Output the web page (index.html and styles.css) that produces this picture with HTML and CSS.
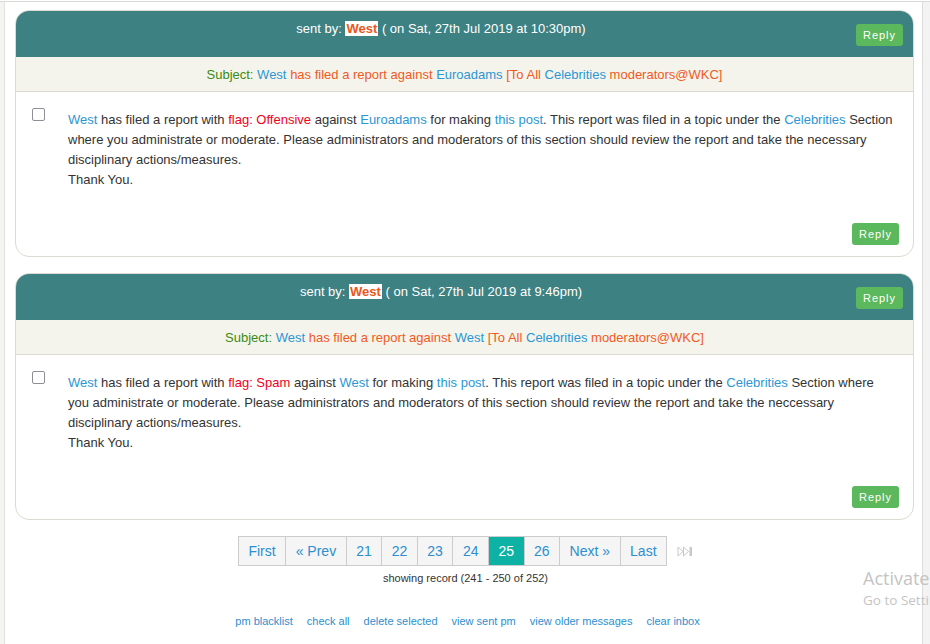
FILE: index.html
```html
<!DOCTYPE html>
<html lang="en">
<head>
<meta charset="utf-8">
<title>Inbox</title>
<link rel="stylesheet" href="styles.css">
</head>
<body>
<div class="page">
  <div class="gutter-left"></div>
  <main class="main">
    <article class="card">
      <header class="card-head">
        <div class="sent">sent by: <span class="sender">West</span> ( on Sat, 27th Jul 2019 at 10:30pm)</div>
        <a class="btn-reply" href="#">Reply</a>
      </header>
      <div class="subject"><span class="lbl">Subject:</span> <a class="blue" href="#">West</a> <span class="orange">has filed a report against</span> <a class="blue" href="#">Euroadams</a> <span class="orange">[To All</span> <a class="blue" href="#">Celebrities</a> <span class="orange">moderators@WKC]</span></div>
      <div class="card-body">
        <div class="msg-row">
          <input class="check" type="checkbox">
          <div class="msg-text">
            <a class="blue" href="#">West</a> has filed a report with <span class="red">flag: Offensive</span> against <a class="blue" href="#">Euroadams</a> for making <a class="blue" href="#">this post</a>. This report was filed in a topic under the <a class="blue" href="#">Celebrities</a> Section where you administrate or moderate. Please administrators and moderators of this section should review the report and take the necessary disciplinary actions/measures.<br>Thank You.
          </div>
        </div>
        <div class="msg-actions"><a class="btn-reply" href="#">Reply</a></div>
      </div>
    </article>

    <article class="card">
      <header class="card-head">
        <div class="sent">sent by: <span class="sender">West</span> ( on Sat, 27th Jul 2019 at 9:46pm)</div>
        <a class="btn-reply" href="#">Reply</a>
      </header>
      <div class="subject"><span class="lbl">Subject:</span> <a class="blue" href="#">West</a> <span class="orange">has filed a report against</span> <a class="blue" href="#">West</a> <span class="orange">[To All</span> <a class="blue" href="#">Celebrities</a> <span class="orange">moderators@WKC]</span></div>
      <div class="card-body">
        <div class="msg-row">
          <input class="check" type="checkbox">
          <div class="msg-text">
            <a class="blue" href="#">West</a> has filed a report with <span class="red">flag: Spam</span> against <a class="blue" href="#">West</a> for making <a class="blue" href="#">this post</a>. This report was filed in a topic under the <a class="blue" href="#">Celebrities</a> Section where you administrate or moderate. Please administrators and moderators of this section should review the report and take the neccessary disciplinary actions/measures.<br>Thank You.
          </div>
        </div>
        <div class="msg-actions"><a class="btn-reply" href="#">Reply</a></div>
      </div>
    </article>

    <div class="pager-row">
      <nav class="pager">
        <a href="#">First</a><a href="#">« Prev</a><a href="#">21</a><a href="#">22</a><a href="#">23</a><a href="#">24</a><span class="active">25</span><a href="#">26</a><a href="#">Next »</a><a href="#">Last</a>
      </nav>
      <svg class="end-icon" width="16" height="11" viewBox="0 0 16 11" aria-hidden="true">
        <path d="M1 1 L6 5.5 L1 10 Z" fill="none" stroke="#c8c8c8" stroke-width="1"/>
        <path d="M6.5 1 L11.5 5.5 L6.5 10 Z" fill="none" stroke="#c8c8c8" stroke-width="1"/>
        <rect x="12.5" y="1" width="2.5" height="9" fill="#c8c8c8"/>
      </svg>
    </div>
    <p class="showing">showing record (241 - 250 of 252)</p>

    <div class="links">
      <a href="#">pm blacklist</a><a href="#">check all</a><a href="#">delete selected</a><a href="#">view sent pm</a><a href="#">view older messages</a><a href="#">clear inbox</a>
    </div>
  </main>
  <div class="gutter-right"></div>
</div>
<div class="watermark">
  <div class="wm-title">Activate Windows</div>
  <div class="wm-sub">Go to Settings to activate Windows.</div>
</div>
</body>
</html>
```

FILE: styles.css
```css
html, body {
  margin: 0;
  padding: 0;
  background: #fff;
}
body {
  font-family: "Liberation Sans", Arial, sans-serif;
  font-size: 13px;
  color: #333;
  overflow: hidden;
}
a { text-decoration: none; }

.page {
  display: flex;
  margin-top: 1px;
  border-top: 1px solid #d9d9d9;
  min-height: 642px;
}
.gutter-left {
  width: 4px;
  background: #f4f4f4;
  border-right: 1px solid #e3e2d8;
}
.gutter-right {
  width: 7px;
  background: #f3f3f3;
  border-left: 1px solid #dcdcdc;
}
.main {
  flex: 1;
  padding: 8px 8px 0 10px;
  min-width: 0;
}

.card {
  border: 1px solid #dcdbcf;
  border-radius: 14px;
  overflow: hidden;
  margin-bottom: 16px;
  background: #fff;
}
.card-head {
  display: flex;
  align-items: flex-start;
  background: #3d8183;
  height: 46px;
  padding: 0 10px;
}
.sent {
  flex: 1;
  text-align: center;
  color: #fff;
  line-height: 16px;
  padding-top: 10px;
}
.sender {
  background: #fff;
  color: #e9571d;
  font-weight: bold;
  padding: 0 1px;
}
.card-head .btn-reply {
  margin-top: 13px;
}
.btn-reply {
  display: inline-block;
  width: 47px;
  height: 22px;
  line-height: 22px;
  text-align: center;
  background: #5cb85c;
  color: #fff;
  font-size: 11px;
  letter-spacing: 1px;
  border-radius: 3px;
}

.subject {
  background: #f5f4ec;
  border-bottom: 1px solid #dcdbcf;
  height: 34px;
  line-height: 35px;
  text-align: center;
}
.lbl { color: #3c8a14; }
.blue { color: #2b97d3; }
.orange { color: #f05a1e; }
.red { color: #f2001a; }

.card-body {
  padding: 17px 14px 11px 16px;
}
.msg-row {
  display: flex;
  align-items: flex-start;
}
.check {
  appearance: none;
  -webkit-appearance: none;
  width: 13px;
  height: 13px;
  margin: -1px 23px 0 0;
  border: 1px solid #8e8e96;
  border-radius: 2px;
  background: #fff;
  flex: none;
}
.msg-text {
  flex: 1;
  line-height: 20px;
  padding-top: 1px;
  padding-right: 5px;
}
.msg-actions {
  margin-top: 33px;
  text-align: right;
}

.pager-row {
  display: flex;
  justify-content: center;
  align-items: center;
  gap: 10px;
  padding-left: 2px;
}
.pager {
  display: flex;
  border: 1px solid #cccccc;
  height: 28px;
}
.pager a, .pager span {
  display: block;
  padding: 0 9.5px;
  line-height: 28px;
  font-size: 14px;
  color: #2b8fd0;
  background: #f5f5f5;
  border-left: 1px solid #cccccc;
}
.pager a:first-child { border-left: none; }
.pager .active {
  background: #0db2a5;
  color: #fff;
}
.end-icon { display: block; margin-top: 1px; }

.showing {
  margin: 5px 0 0;
  text-align: center;
  font-size: 11px;
  line-height: 14px;
  color: #333;
  padding-left: 2px;
}

.links {
  display: flex;
  justify-content: center;
  gap: 14px;
  margin-top: 30px;
  font-size: 11px;
  padding-left: 6px;
}
.links a { color: #2b8fd0; }

.watermark {
  position: absolute;
  left: 863px;
  top: 566px;
  color: #c4c4c4;
  font-family: "Open Sans", "Noto Sans", sans-serif;
  white-space: nowrap;
}
.wm-title { font-size: 18px; line-height: 24px; }
.wm-sub { font-size: 13.5px; line-height: 20px; }
```
